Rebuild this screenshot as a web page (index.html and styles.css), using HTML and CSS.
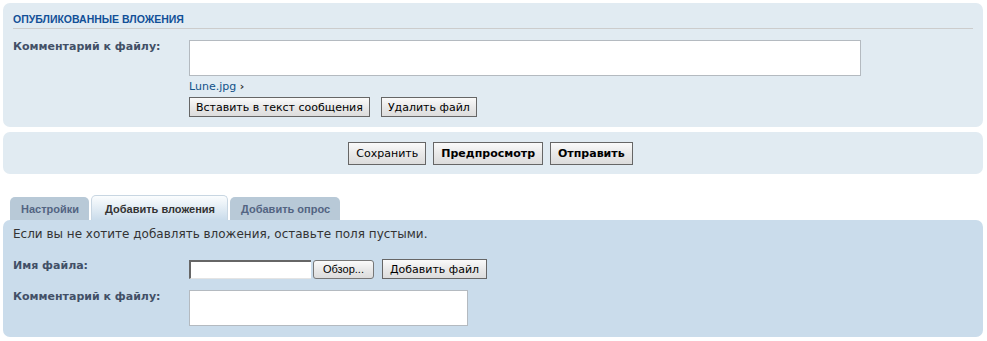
FILE: index.html
```html
<!DOCTYPE html>
<html lang="ru">
<head>
  <meta charset="UTF-8">
  <title>Вложения</title>
  <link rel="stylesheet" href="styles.css">
</head>
<body>
  <div class="wrap">

    <div class="panel">
      <h3>Опубликованные вложения</h3>
      <dl class="row">
        <dt><label>Комментарий к файлу:</label></dt>
        <dd>
          <textarea class="comment-wide"></textarea>
          <div class="file-link"><a href="#">Lune.jpg</a> <span class="arrow">&#8250;</span></div>
          <div class="btns">
            <button class="btn">Вставить в текст сообщения</button>
            <button class="btn">Удалить файл</button>
          </div>
        </dd>
      </dl>
    </div>

    <div class="panel submit-bar">
      <button class="btn">Сохранить</button>
      <button class="btn strong">Предпросмотр</button>
      <button class="btn strong">Отправить</button>
    </div>

    <ul class="tabs">
      <li class="tab">Настройки</li>
      <li class="tab active">Добавить вложения</li>
      <li class="tab">Добавить опрос</li>
    </ul>

    <div class="panel tab-body">
      <p class="hint">Если вы не хотите добавлять вложения, оставьте поля пустыми.</p>
      <dl class="row">
        <dt><label>Имя файла:</label></dt>
        <dd class="file-row">
          <span class="file-input"></span>
          <button class="btn browse">Обзор...</button>
          <button class="btn add">Добавить файл</button>
        </dd>
      </dl>
      <dl class="row">
        <dt><label>Комментарий к файлу:</label></dt>
        <dd><textarea class="comment-small"></textarea></dd>
      </dl>
    </div>

  </div>
</body>
</html>
```

FILE: styles.css
```css
body {
  margin: 0;
  background-color: #fff;
  font-family: 'DejaVu Sans', Verdana, sans-serif;
  color: #333;
}

.wrap {
  padding: 3px 4px 0 3px;
}

.panel {
  background-color: #e1ebf2;
  border-radius: 7px;
  padding: 10px 10px 0 10px;
  height: 124px;
  box-sizing: border-box;
}

h3 {
  margin: 0;
  font-family: 'Liberation Sans', Arial, sans-serif;
  font-size: 10.5px;
  line-height: 12px;
  font-weight: bold;
  text-transform: uppercase;
  color: #115098;
  border-bottom: 1px solid #cccccc;
  padding-bottom: 3px;
  margin-bottom: 11px;
}

.row {
  display: flex;
  margin: 0;
}

dt {
  width: 176px;
  flex-shrink: 0;
  font-size: 11px;
  line-height: 13px;
  padding-top: 0;
}

dt label {
  font-weight: bold;
  color: #425067;
}

dd {
  margin: 0;
}

textarea {
  display: block;
  box-sizing: border-box;
  border: 1px solid #b4bac0;
  background: #fff;
  resize: none;
  margin: 0;
}

.comment-wide {
  width: 672px;
  height: 36px;
}

.file-link {
  font-size: 11px;
  margin-top: 4px;
  height: 16px;
}

.file-link a {
  color: #105289;
  text-decoration: none;
}

.arrow {
  font-weight: bold;
  color: #333;
}

.btns {
  display: flex;
  gap: 11px;
  margin-top: 1px;
}

.btn {
  font-family: 'DejaVu Sans', Verdana, sans-serif;
  font-size: 11px;
  color: #000;
  height: 20px;
  padding: 0 6px;
  border: 1px solid #666;
  background: linear-gradient(#fafafa, #e9e9e9 50%, #dcdcdc);
  border-radius: 0;
  margin: 0;
}

.btn.strong {
  font-weight: bold;
}

.submit-bar {
  margin-top: 5px;
  height: 42px;
  padding: 0 5px 0 0;
  display: flex;
  justify-content: center;
  align-items: center;
  gap: 7px;
}

.submit-bar .btn {
  height: 23px;
  padding: 0 7px;
}

.tabs {
  list-style: none;
  margin: 21px 0 0 0;
  padding: 0 0 0 7px;
  display: flex;
  gap: 2px;
  height: 25px;
  align-items: flex-end;
}

.tab {
  font-family: 'Liberation Sans', Arial, sans-serif;
  font-size: 11px;
  font-weight: bold;
  color: #536482;
  background-color: #b8c9d7;
  border-radius: 5px 5px 0 0;
  padding: 0 10px 0 11px;
  height: 23px;
  line-height: 24px;
}

.tab.active {
  color: #333;
  height: 25px;
  line-height: 26px;
  padding: 0 12px 0 13px;
  background: linear-gradient(#fbfdfe, #cadceb);
  border: 1px solid #c8d6e2;
  border-bottom: 0;
  box-sizing: border-box;
}

.tab-body {
  background-color: #cadceb;
  margin-top: 0;
  height: 117px;
  padding-top: 7px;
}

.hint {
  margin: 0 0 17px 0;
  font-size: 12px;
  line-height: 15px;
  color: #333;
}

.tab-body .row {
  margin-bottom: 11px;
}

.file-row {
  display: flex;
  align-items: center;
}

.file-input {
  display: inline-block;
  width: 122px;
  height: 19px;
  box-sizing: border-box;
  background: #fff;
  border-top: 2px solid #666;
  border-left: 2px solid #666;
  border-bottom: 1px solid #e4e4e4;
}

.btn.browse {
  margin-left: 2px;
  height: 19px;
  border-radius: 3px;
  border-color: #777;
  font-family: 'Liberation Sans', Arial, sans-serif;
  padding: 0 9px;
}

.btn.add {
  margin-left: 8px;
  height: 20px;
  padding: 0 7px;
}

.comment-small {
  width: 279px;
  height: 36px;
}
```
